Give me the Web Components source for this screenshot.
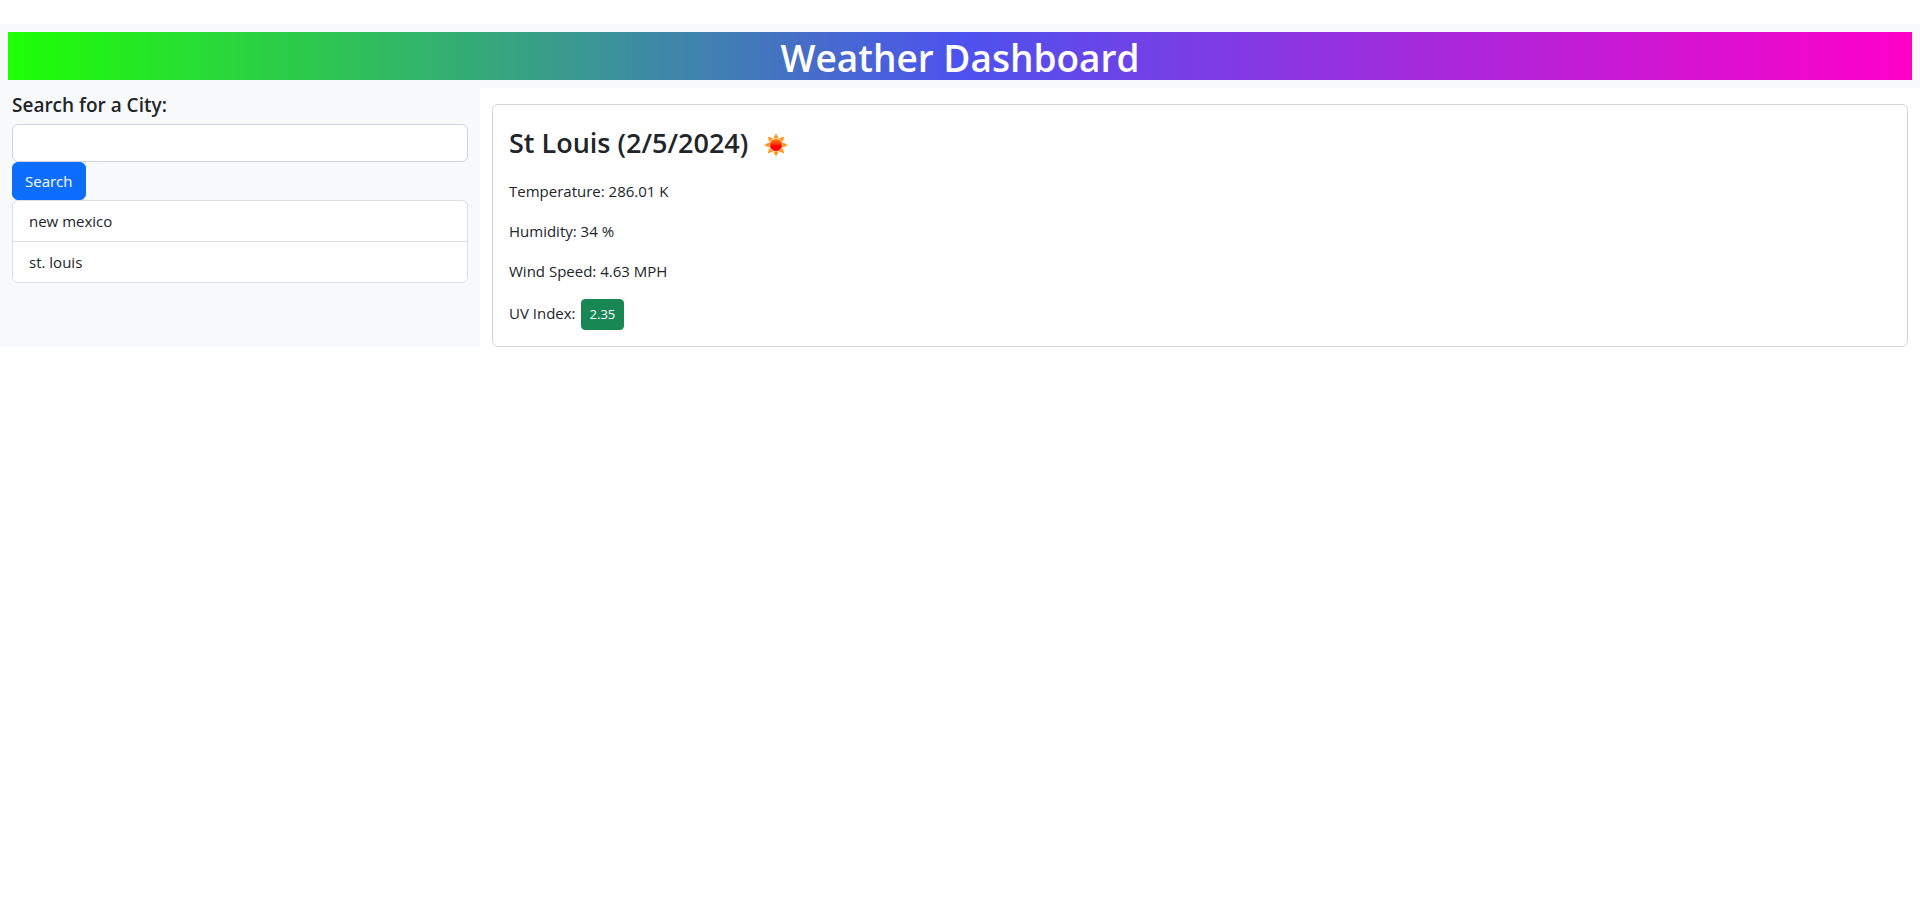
<!DOCTYPE html>
<html lang="en">
<head>
<meta charset="utf-8">
<meta name="viewport" content="width=device-width, initial-scale=1">
<title>Weather Dashboard</title>
<style>
  body {
    margin: 0;
    background: #fff;
    color: #212529;
    font: 400 15px/24px "Open Sans", "Noto Sans", sans-serif;
  }
</style>
</head>
<body>
<weather-app></weather-app>

<script>
  function define(name, html) {
    const template = document.createElement('template');
    template.innerHTML = html;
    customElements.define(name, class extends HTMLElement {
      constructor() {
        super();
        this.attachShadow({ mode: 'open' }).append(template.content.cloneNode(true));
      }
    });
  }

  define('page-banner', `
    <style>
      :host { display: block; padding: 8px; background: #f8f9fa; }
      h1 {
        margin: 0;
        padding-top: 4px;
        background: linear-gradient(90deg, #1eff06 0%, #4d52ee 50%, #ff00c8 100%);
        color: #fff;
        font-size: 37px;
        font-weight: 600;
        line-height: 44px;
        text-align: center;
      }
    </style>
    <h1><slot></slot></h1>`);

  define('city-search', `
    <style>
      :host { display: block; }
      form { margin: 0; }
      label {
        display: block;
        padding-top: 2px;
        margin-bottom: 8px;
        font-size: 19px;
        font-weight: 600;
        line-height: 22px;
      }
      input {
        display: block;
        box-sizing: border-box;
        width: 100%;
        height: 38px;
        padding: 6px 12px;
        border: 1px solid #ced4da;
        border-radius: 6px;
        background: #fff;
        color: inherit;
        font: inherit;
      }
      button {
        display: block;
        padding: 6px 12px;
        border: 1px solid #0d6efd;
        border-radius: 6px;
        background: #0d6efd;
        color: #fff;
        font: inherit;
        cursor: pointer;
      }
    </style>
    <form onsubmit="return false">
      <label for="city">Search for a City:</label>
      <input id="city" type="text">
      <button type="submit">Search</button>
    </form>`);

  define('search-history', `
    <style>
      :host { display: block; }
      ul {
        margin: 0;
        padding: 0;
        list-style: none;
        border: 1px solid #dfdfdf;
        border-radius: 6px;
        background: #fff;
      }
      li { padding: 8px 16px; }
      li + li { border-top: 1px solid #dfdfdf; }
    </style>
    <ul>
      <li>new mexico</li>
      <li>st. louis</li>
    </ul>`);

  define('sun-icon', `
    <style>
      :host { display: block; width: 50px; height: 50px; }
      svg { display: block; width: 100%; height: 100%; }
    </style>
    <svg viewBox="-24 -24 50 50" aria-hidden="true">
      <defs>
        <linearGradient id="core" x1="0" y1="0" x2="0" y2="1">
          <stop offset="0" stop-color="#ff8a1c"/>
          <stop offset=".4" stop-color="#ff3a08"/>
          <stop offset=".6" stop-color="#ff0000"/>
        </linearGradient>
        <path id="ray" d="M-2.7-6.8 0-11.6 2.7-6.8Z"/>
      </defs>
      <g fill="#ff981a">
        <use href="#ray"/>
        <use href="#ray" transform="rotate(45)"/>
        <use href="#ray" transform="rotate(90)"/>
        <use href="#ray" transform="rotate(135)"/>
        <use href="#ray" transform="rotate(180)"/>
        <use href="#ray" transform="rotate(225)"/>
        <use href="#ray" transform="rotate(270)"/>
        <use href="#ray" transform="rotate(315)"/>
      </g>
      <circle r="6.3" fill="url(#core)" stroke="#ffa64a" stroke-width=".6"/>
    </svg>`);

  define('weather-card', `
    <style>
      :host {
        display: block;
        padding: 16px;
        border: 1px solid #d3d3d3;
        border-radius: 6px;
        background: #fff;
      }
      header { display: flex; align-items: center; gap: 4px; margin-bottom: 8px; }
      h2 { margin: 0; padding-bottom: 6px; font-size: 27px; font-weight: 600; line-height: 34px; }
      p { margin: 0 0 16px; }
      .uv { display: flex; gap: 5px; margin: 0; }
      .uv span { line-height: 28px; }
      button {
        padding: 4px 8px;
        border: 1px solid #198754;
        border-radius: 4px;
        background: #198754;
        color: #fff;
        font: inherit;
        font-size: 13px;
        line-height: 21px;
      }
    </style>
    <header><h2><slot name="title"></slot></h2><sun-icon></sun-icon></header>
    <p>Temperature: 286.01 K</p>
    <p>Humidity: 34 %</p>
    <p>Wind Speed: 4.63 MPH</p>
    <p class="uv"><span>UV Index:</span><button type="button">2.35</button></p>`);

  define('weather-app', `
    <style>
      :host { display: block; padding-top: 24px; }
      main { display: grid; grid-template-columns: 1fr 3fr; }
      aside { padding: 4px 12px; background: #f8f9fa; }
      section { padding: 16px 12px 0; }
    </style>
    <page-banner>Weather Dashboard</page-banner>
    <main>
      <aside>
        <city-search></city-search>
        <search-history></search-history>
      </aside>
      <section>
        <weather-card><span slot="title">St Louis (2/5/2024)</span></weather-card>
      </section>
    </main>`);
</script>
</body>
</html>
